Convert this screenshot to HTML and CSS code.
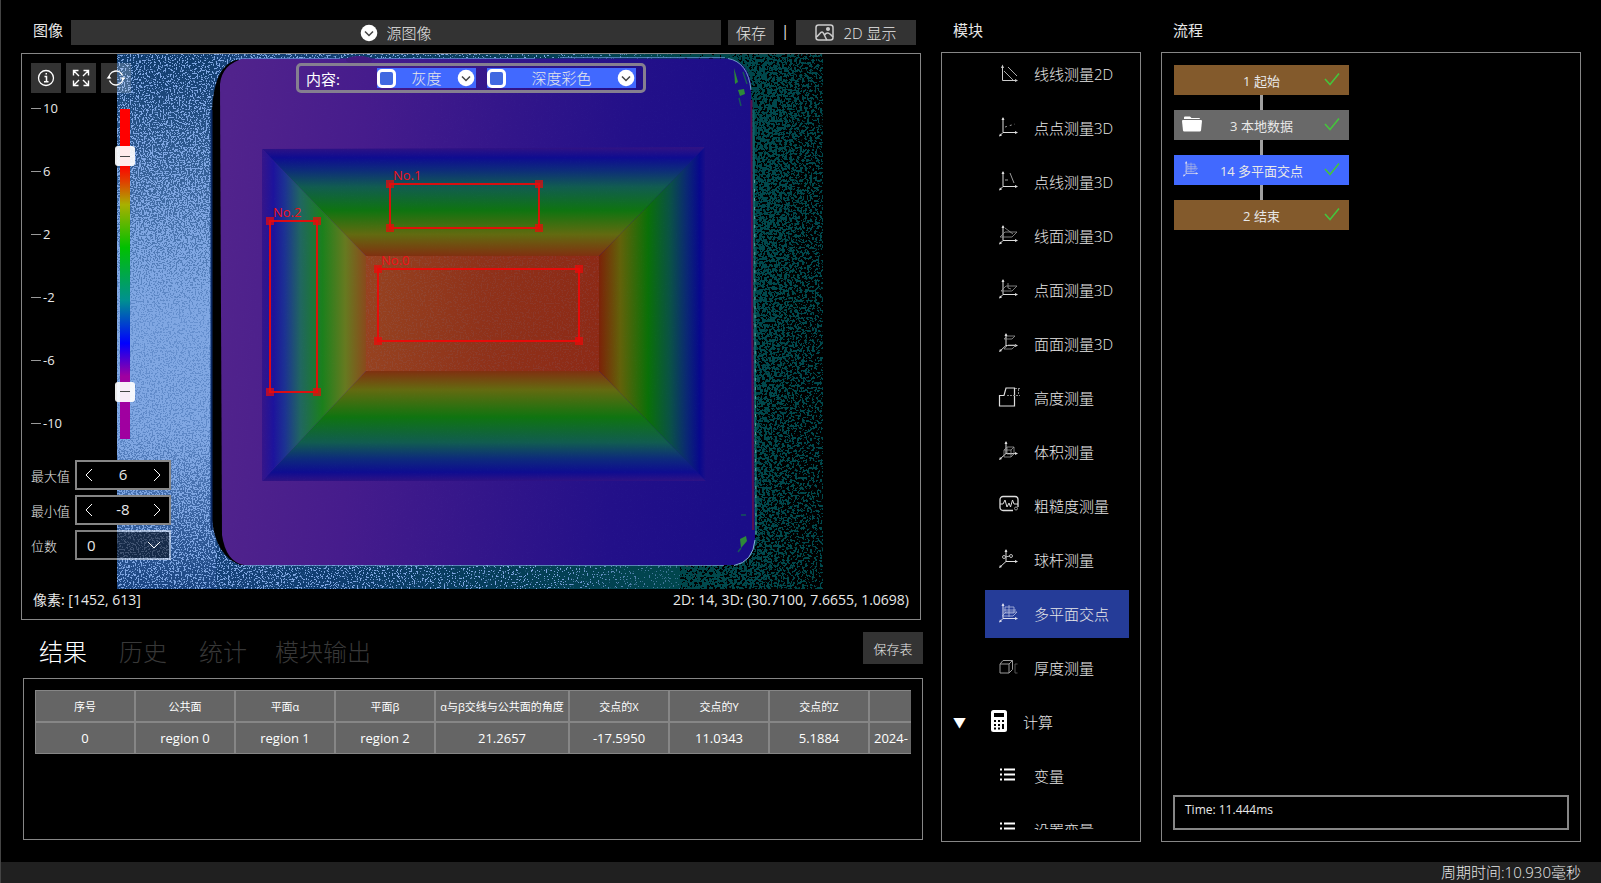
FILE: index.html
```html
<!DOCTYPE html>
<html lang="zh-CN">
<head>
    <meta charset="UTF-8">
    <meta name="viewport" content="width=device-width, initial-scale=1.0">
    <title>多平面交点</title>
    <link rel="stylesheet" href="styles.css">
</head>
<body>

    <!-- 公用图标 -->
    <svg class="defs" aria-hidden="true">
        <symbol id="i-down" viewBox="0 0 18 18"><circle cx="9" cy="9" r="8.3" fill="#fff"/><path d="M5 7.5l4 4 4-4" fill="none" stroke="#444" stroke-width="1.5"/></symbol>
        <symbol id="i-check" viewBox="0 0 16 14"><path d="M1 7l5 5.500L15 1.500" fill="none" stroke="#45c43c" stroke-width="1.600"/></symbol>
        <symbol id="i-axis" viewBox="0 0 20 20"><path d="M4 1v14.500h14M4 15.500l-3 3" fill="none" stroke="#ddd"/><path d="M4 0l-1.500 3h3zM19 15.500l-3-1.500v3zM0 19.500l1-3 2 2z" fill="#ddd"/></symbol>
        <symbol id="i-axis2" viewBox="0 0 20 20"><path d="M7 1v11.500h11M7 12.500l-6 5.500" fill="none" stroke="#ddd"/><path d="M7 0l-1.500 3h3zM19 12.500l-3-1.500v3zM0 19l1-3 2 2z" fill="#ddd"/></symbol>
        <symbol id="i-planes" viewBox="0 0 20 20"><path d="M4 1v14.500h14M4 15.500l-3 3" fill="none" stroke="#dde"/><path d="M4 0l-1.500 3h3zM19 15.500l-3-1.500v3zM0 19.500l1-3 2 2z" fill="#dde"/><path d="M6 4h9v6H6zM3 13l4-4h11l-4 4zM10 2v12M5 7h12" fill="none" stroke="#b4bbdf" stroke-width=".8"/></symbol>
        <symbol id="i-list" viewBox="0 0 20 20"><path d="M5 4.500h11M5 9.500h11M5 14.500h11M1 4.500h2M1 9.500h2M1 14.500h2" stroke="#fff" stroke-width="2"/></symbol>
    </svg>

    <main class="main">

        <!-- 左侧：图像与结果 -->
        <div class="left">
            <section class="image">
                <div class="image-head">
                    <h2 class="title">图像</h2>
                    <label class="source">
                        <svg class="icon18"><use href="#i-down"/></svg>
                        <select aria-label="图像来源"><option>源图像</option></select>
                    </label>
                    <button class="btn btn-save">保存</button>
                    <span class="sep">|</span>
                    <button class="btn btn-show">
                        <svg width="19" height="17" viewBox="0 0 19 17" fill="none" stroke="#ccc" stroke-width="1.500"><rect x="1" y="1" width="17" height="15" rx="2.500"/><path d="M1 13c3-1 4-5 6-5s3 6 5 8M9.500 11c2-3 4-3 8.500 2"/><circle cx="13" cy="5" r="1.300" fill="#ccc"/></svg>
                        2D 显示
                    </button>
                </div>

                <div class="viewer">
                    <!-- 深度图 -->
                    <svg class="scene" viewBox="22 54 898 565" preserveAspectRatio="xMinYMin meet" aria-hidden="true">
                        <defs>
                            <filter id="grainLight" x="0" y="0" width="1" height="1" color-interpolation-filters="sRGB">
                                <feTurbulence type="fractalNoise" baseFrequency="0.63" numOctaves="2" seed="4"/>
                                <feColorMatrix values="0 0 0 0 0  0 0 0 0 0  0 0 0 0 0  0 0 0 3 -1" result="n"/>
                                <feComposite in="SourceGraphic" in2="n" operator="arithmetic" k2="7" k3="7" k4="-7" result="m"/>
                                <feFlood flood-color="#80a7e3"/>
                                <feComposite in2="m" operator="in"/>
                            </filter>
                            <filter id="grainTeal" filterUnits="userSpaceOnUse" x="680" y="54" width="143" height="535" color-interpolation-filters="sRGB">
                                <feTurbulence type="fractalNoise" baseFrequency="0.4" numOctaves="3" seed="11"/>
                                <feColorMatrix values="0 0 0 0 0  0 0 0 0 0  0 0 0 0 0  0 0 0 3 -1" result="n"/>
                                <feComposite in="SourceGraphic" in2="n" operator="arithmetic" k2="14" k3="14" k4="-14" result="m"/>
                                <feFlood flood-color="#00484c"/>
                                <feComposite in2="m" operator="in"/>
                            </filter>
                            <linearGradient id="base" x1="117" x2="823" y1="0" y2="0" gradientUnits="userSpaceOnUse">
                                <stop offset="0" stop-color="#1c4680"/><stop offset=".3" stop-color="#0f3d70"/><stop offset=".55" stop-color="#053d58"/><stop offset=".8" stop-color="#00464c"/><stop offset="1" stop-color="#00464c"/>
                            </linearGradient>
                            <linearGradient id="side" x1="0" x2="0" y1="54" y2="589" gradientUnits="userSpaceOnUse">
                                <stop offset="0" stop-color="#0f3b6c"/><stop offset=".5" stop-color="#6690cf"/><stop offset=".7" stop-color="#5f89c8"/><stop offset="1" stop-color="#1a4480"/>
                            </linearGradient>
                            <linearGradient id="sideDensity" x1="0" x2="0" y1="54" y2="589" gradientUnits="userSpaceOnUse">
                                <stop offset="0" stop-color="#fff" stop-opacity=".28"/><stop offset=".25" stop-color="#fff" stop-opacity=".52"/><stop offset=".45" stop-color="#fff" stop-opacity=".78"/><stop offset=".7" stop-color="#fff" stop-opacity=".72"/><stop offset=".85" stop-color="#fff" stop-opacity=".48"/><stop offset="1" stop-color="#fff" stop-opacity=".32"/>
                            </linearGradient>
                            <linearGradient id="stripDensity" x1="216" x2="700" y1="0" y2="0" gradientUnits="userSpaceOnUse">
                                <stop offset="0" stop-color="#fff" stop-opacity=".34"/><stop offset="1" stop-color="#fff" stop-opacity=".05"/>
                            </linearGradient>
                            <linearGradient id="tealDensity" x1="680" x2="823" y1="0" y2="0" gradientUnits="userSpaceOnUse">
                                <stop offset="0" stop-color="#fff"/><stop offset=".5" stop-color="#fff" stop-opacity=".8"/><stop offset=".75" stop-color="#fff" stop-opacity=".58"/><stop offset="1" stop-color="#fff" stop-opacity=".4"/>
                            </linearGradient>
                            <linearGradient id="fade" x1="0" x2="0" y1="54" y2="589" gradientUnits="userSpaceOnUse">
                                <stop offset="0" stop-color="#fff"/><stop offset=".15" stop-color="#fff"/><stop offset=".5" stop-color="#e8e8e8"/><stop offset=".75" stop-color="#ccc"/><stop offset="1" stop-color="#ccc"/>
                            </linearGradient>
                            <mask id="fadeMask" maskUnits="userSpaceOnUse" x="680" y="54" width="143" height="535"><rect x="680" y="54" width="143" height="535" fill="url(#fade)"/></mask>
                            <linearGradient id="plate" x1="220" x2="755" y1="300" y2="330" gradientUnits="userSpaceOnUse">
                                <stop offset="0" stop-color="#51238c"/><stop offset=".25" stop-color="#461c8c"/><stop offset=".5" stop-color="#34168a"/><stop offset=".75" stop-color="#231089"/><stop offset="1" stop-color="#1a0d88"/>
                            </linearGradient>
                            <linearGradient id="slopeL" x1="262" x2="366" y1="0" y2="0" gradientUnits="userSpaceOnUse">
                                <stop offset="0" stop-color="#35158a"/><stop offset=".11" stop-color="#1d139c"/><stop offset=".22" stop-color="#1c3292"/><stop offset=".37" stop-color="#206660"/><stop offset=".58" stop-color="#1b801c"/><stop offset=".8" stop-color="#667a20"/><stop offset="1" stop-color="#8a4a1c"/>
                            </linearGradient>
                            <linearGradient id="slopeR" x1="706" x2="599" y1="0" y2="0" gradientUnits="userSpaceOnUse">
                                <stop offset="0" stop-color="#1d0f88"/><stop offset=".06" stop-color="#08088c"/><stop offset=".18" stop-color="#0a2874"/><stop offset=".33" stop-color="#0a5048"/><stop offset=".54" stop-color="#0a7008"/><stop offset=".8" stop-color="#62620a"/><stop offset="1" stop-color="#7c2208"/>
                            </linearGradient>
                            <linearGradient id="slopeT" x1="0" x2="0" y1="148" y2="256" gradientUnits="userSpaceOnUse">
                                <stop offset="0" stop-color="#2f1284"/><stop offset=".09" stop-color="#0e0c90"/><stop offset=".2" stop-color="#0d2a7c"/><stop offset=".36" stop-color="#115c50"/><stop offset=".58" stop-color="#0f7410"/><stop offset=".8" stop-color="#626a10"/><stop offset="1" stop-color="#803010"/>
                            </linearGradient>
                            <linearGradient id="slopeB" x1="0" x2="0" y1="481" y2="371" gradientUnits="userSpaceOnUse">
                                <stop offset="0" stop-color="#2f1284"/><stop offset=".08" stop-color="#0e0c90"/><stop offset=".2" stop-color="#0d2a7c"/><stop offset=".35" stop-color="#115c50"/><stop offset=".58" stop-color="#0f7410"/><stop offset=".83" stop-color="#646a10"/><stop offset="1" stop-color="#803010"/>
                            </linearGradient>
                            <linearGradient id="topFace" x1="0" x2="1" y1="0" y2="0">
                                <stop offset="0" stop-color="#964220"/><stop offset=".5" stop-color="#8f321a"/><stop offset="1" stop-color="#8d2a16"/>
                            </linearGradient>
                        </defs>

                        <!-- 背景噪点 -->
                        <rect x="117" y="54" width="563" height="535" fill="url(#base)"/>
                        <rect x="117" y="54" width="99" height="535" fill="url(#side)"/>
                        <rect x="117" y="54" width="99" height="535" fill="url(#sideDensity)" filter="url(#grainLight)"/>
                        <rect x="216" y="54" width="484" height="535" fill="url(#stripDensity)" filter="url(#grainLight)"/>
                        <g filter="url(#grainTeal)">
                            <rect x="680" y="54" width="143" height="535" fill="url(#tealDensity)" mask="url(#fadeMask)"/>
                        </g>

                        <!-- 底板 -->
                        <path d="M212 110V520Q216 556 240 565H260L250 60H236Q214 66 212 110z" fill="#000"/>
                        <path d="M211.500 110v420" stroke="#0b2a66" stroke-width="2"/>
                        <path d="M220 84Q222 64 244 58.500H728Q748 62 751 84L755 540Q753 562 734 565H244Q226 562 222 535z" fill="url(#plate)"/>
                        <ellipse cx="359" cy="60" rx="13" ry="4" fill="#431c80"/>
                        <path d="M236 58.500q3-.5 8 0h96M375 58.500h160M560 57.500h165" fill="none" stroke="#6b94dc" stroke-opacity=".7"/>
                        <path d="M244 565.500h480" stroke="#7aa4dc" stroke-opacity=".7"/>
                        <path d="M728 58.500Q748 62 751 90" fill="none" stroke="#86b6d8" stroke-opacity=".8"/>
                        <path d="M734 565.500Q753 562 755 540" fill="none" stroke="#86b6d8"/>
                        <path d="M751.500 100L753 530" stroke="#5a1050" stroke-width="2"/>
                        <path d="M753.500 110L756 535" stroke="#0c6468" stroke-width="2"/>
                        <path d="M754.500 180L756 535" stroke="#5a9a9c" stroke-dasharray="3 6"/>
                        <path d="M734 68l4 14-3 2zM738 90l6-1 1 5-5 2zM740 539l6-3 1 5-6 7z" fill="#2d8a38"/>
                        <path d="M739 98l2 8M743 72l4 12M741 548l-3 4M741 515h5" stroke="#16565a" stroke-width="1.500"/>

                        <!-- 四个斜面和顶面 -->
                        <path d="M262 149L366 256H599L705 147z" fill="url(#slopeT)"/>
                        <path d="M262 481L366 371H599L706 481z" fill="url(#slopeB)"/>
                        <path d="M262 149L366 256V371L262 481z" fill="url(#slopeL)"/>
                        <path d="M705 147L599 256V371L706 481z" fill="url(#slopeR)"/>
                        <rect x="366" y="256" width="233" height="115" fill="url(#topFace)"/>
                        <rect x="224" y="62" width="524" height="500" fill="#fff" fill-opacity=".01" filter="url(#grainLight)" opacity=".16"/>
                        <rect x="366" y="256" width="233" height="115" fill="#fff" fill-opacity=".3" filter="url(#grainLight)" opacity=".07"/>

                        <!-- 测量区域 -->
                        <g fill="none" stroke="#f00808" stroke-width="2" stroke-opacity=".9">
                            <rect x="390" y="184" width="149" height="44"/>
                            <rect x="270" y="221" width="47" height="171"/>
                            <rect x="378" y="269" width="201" height="72"/>
                        </g>
                        <path d="M386 180h8v8h-8zM535 180h8v8h-8zM386 224h8v8h-8zM535 224h8v8h-8zM266 217h8v8h-8zM313 217h8v8h-8zM266 388h8v8h-8zM313 388h8v8h-8zM374 265h8v8h-8zM575 265h8v8h-8zM374 337h8v8h-8zM575 337h8v8h-8z" fill="#f00808" fill-opacity=".7"/>
                        <g class="roi-name">
                            <text x="393" y="180">No.1</text>
                            <text x="273" y="217">No.2</text>
                            <text x="381" y="265">No.0</text>
                        </g>
                    </svg>

                    <div class="viewer-top">
                        <div class="tools">
                            <button class="tool" aria-label="信息"><svg width="18" height="18" viewBox="0 0 18 18" fill="none" stroke="#fff" stroke-width="1.300"><circle cx="9" cy="9" r="7.500"/><path d="M7.500 7.500h2v5M7 12.800h4.500M8.500 4.800h1.500" stroke-width="1.500"/></svg></button>
                            <button class="tool" aria-label="全屏"><svg width="18" height="18" viewBox="0 0 18 18" fill="none" stroke="#fff" stroke-width="1.400"><path d="M1.500 6.500v-5h5M11.500 1.500h5v5M16.500 11.500v5h-5M6.500 16.500h-5v-5M2 2l5 5M16 2l-5 5M16 16l-5-5M2 16l5-5"/></svg></button>
                            <button class="tool" aria-label="刷新"><svg width="20" height="18" viewBox="0 0 20 18" fill="none" stroke="#fff" stroke-width="1.400"><path d="M3 9.500A7 7 0 0 1 16.500 6.500M17 8.500A7 7 0 0 1 3.500 11.500"/><path d="M.5 9.500L3 6.500l2.500 3zM14.500 8.500L17 11.500l2.500-3z" fill="#fff" stroke="none"/></svg></button>
                        </div>
                        <div class="content-bar">
                            <span class="content-label">内容:</span>
                            <div class="layer layer-gray">
                                <input type="checkbox" aria-label="灰度">
                                <select aria-label="灰度图层"><option>灰度</option></select>
                                <svg class="icon18"><use href="#i-down"/></svg>
                            </div>
                            <div class="layer layer-depth">
                                <input type="checkbox" aria-label="深度彩色">
                                <select aria-label="深度图层"><option>深度彩色</option></select>
                                <svg class="icon18"><use href="#i-down"/></svg>
                            </div>
                        </div>
                    </div>

                    <div class="scale">
                        <ul class="ticks">
                            <li>10</li>
                            <li>6</li>
                            <li>2</li>
                            <li>-2</li>
                            <li>-6</li>
                            <li>-10</li>
                        </ul>
                        <div class="slider">
                            <input type="range" min="-10.2" max="8.2" step="0.2" value="6" aria-label="最大值">
                            <input type="range" min="-10.2" max="8.2" step="0.2" value="-8" aria-label="最小值">
                        </div>
                    </div>

                    <div class="limits">
                        <div class="limit">
                            <label for="max">最大值</label>
                            <div class="stepper">
                                <button aria-label="减小最大值"><svg width="8" height="14" viewBox="0 0 8 14"><path d="M7 1L1 7l6 6"/></svg></button>
                                <input type="text" id="max" value="6">
                                <button aria-label="增大最大值"><svg width="8" height="14" viewBox="0 0 8 14"><path d="M1 1l6 6-6 6"/></svg></button>
                            </div>
                        </div>
                        <div class="limit">
                            <label for="min">最小值</label>
                            <div class="stepper">
                                <button aria-label="减小最小值"><svg width="8" height="14" viewBox="0 0 8 14"><path d="M7 1L1 7l6 6"/></svg></button>
                                <input type="text" id="min" value="-8">
                                <button aria-label="增大最小值"><svg width="8" height="14" viewBox="0 0 8 14"><path d="M1 1l6 6-6 6"/></svg></button>
                            </div>
                        </div>
                        <div class="limit">
                            <label for="digits">位数</label>
                            <div class="stepper digits">
                                <select id="digits"><option>0</option></select>
                                <svg width="14" height="8" viewBox="0 0 14 8"><path d="M1 1l6 6 6-6"/></svg>
                            </div>
                        </div>
                    </div>

                    <div class="readout">
                        <span>像素: [1452, 613]</span>
                        <span>2D: 14, 3D: (30.7100, 7.6655, 1.0698)</span>
                    </div>
                </div>
            </section>

            <section class="results">
                <div class="results-head">
                    <nav class="tabs">
                        <a href="#result" class="tab active">结果</a>
                        <a href="#history" class="tab">历史</a>
                        <a href="#stats" class="tab">统计</a>
                        <a href="#output" class="tab">模块输出</a>
                    </nav>
                    <button class="btn btn-table">保存表</button>
                </div>
                <div class="table-box" id="result">
                    <div class="table-scroll">
                        <table>
                            <thead>
                                <tr><th>序号</th><th>公共面</th><th>平面α</th><th>平面β</th><th class="wide">α与β交线与公共面的角度</th><th>交点的X</th><th>交点的Y</th><th>交点的Z</th><th class="date"></th></tr>
                            </thead>
                            <tbody>
                                <tr><td>0</td><td>region 0</td><td>region 1</td><td>region 2</td><td>21.2657</td><td>-17.5950</td><td>11.0343</td><td>5.1884</td><td class="date">2024-</td></tr>
                            </tbody>
                        </table>
                    </div>
                </div>
            </section>
        </div>

        <!-- 模块列表 -->
        <section class="modules">
            <h2 class="title">模块</h2>
            <div class="panel">
                <div class="module-scroll">
                    <ul class="module-list">
                        <li><button class="module"><svg class="icon20" viewBox="0 0 20 20"><path d="M3.500 3v14.500H18" fill="none" stroke="#ccc"/><path d="M3.500 1.500L2 5h3zM19 17.500L16 16v3z" fill="#ccc"/><path d="M5 8l9 9M9 4l9 9" fill="none" stroke="#aaa"/></svg>线线测量2D</button></li>
                        <li><button class="module"><svg class="icon20" viewBox="0 0 20 20"><use href="#i-axis"/><path d="M6 10l10-3" stroke="#999" stroke-dasharray="2 3"/></svg>点点测量3D</button></li>
                        <li><button class="module"><svg class="icon20" viewBox="0 0 20 20"><use href="#i-axis"/><path d="M11 2l4 10M6 9h3" stroke="#999"/></svg>点线测量3D</button></li>
                        <li><button class="module"><svg class="icon20" viewBox="0 0 20 20"><use href="#i-axis"/><path d="M1 12l5-5h12l-5 5zM6 3l8 6" fill="none" stroke="#999" stroke-width=".8"/></svg>线面测量3D</button></li>
                        <li><button class="module"><svg class="icon20" viewBox="0 0 20 20"><use href="#i-axis"/><path d="M2 12l5-5h11l-5 5zM9 4v5l3 1" fill="none" stroke="#999" stroke-width=".8"/></svg>点面测量3D</button></li>
                        <li><button class="module"><svg class="icon20" viewBox="0 0 20 20"><use href="#i-axis2"/><path d="M5 6l3-3h8l-3 3zM5 16l4-4h8l-4 4z" fill="none" stroke="#999" stroke-width=".8"/></svg>面面测量3D</button></li>
                        <li><button class="module"><svg class="icon20" viewBox="0 0 20 20"><path d="M.5 8.500h4.500l2-7.500h8.500v18H.5z" fill="none" stroke="#ddd" stroke-width="1.200"/><path d="M16 1.500h5M8 8.500h13M19.500 2v6" fill="none" stroke="#888" stroke-dasharray="2 1"/></svg>高度测量</button></li>
                        <li><button class="module"><svg class="icon20" viewBox="0 0 20 20"><use href="#i-axis2"/><path d="M5 9h7v7H5zM8 6h7v7H8zM5 9l3-3M12 9l3-3M12 16l3-3" fill="none" stroke="#999" stroke-width=".8"/></svg>体积测量</button></li>
                        <li><button class="module"><svg class="icon20" viewBox="0 0 20 20"><path d="M14 15.500H4a3 3 0 0 1-3-3v-8a3 3 0 0 1 3-3h12a3 3 0 0 1 3 3V12" fill="none" stroke="#ddd" stroke-width="1.300"/><path d="M1 9h3l2-4 2 7 2-4 1.500 4 2-7 1.500 4H19" fill="none" stroke="#ddd"/><circle cx="17" cy="13.500" r="1.500" fill="none" stroke="#bbb" stroke-width=".8"/></svg>粗糙度测量</button></li>
                        <li><button class="module"><svg class="icon20" viewBox="0 0 20 20"><use href="#i-axis2"/><circle cx="5" cy="8" r="1.500" fill="none" stroke="#bbb"/><circle cx="12" cy="7" r="1.500" fill="none" stroke="#bbb"/><path d="M6 8l5-1" stroke="#bbb"/></svg>球杆测量</button></li>
                        <li><button class="module selected"><svg class="icon20"><use href="#i-planes"/></svg>多平面交点</button></li>
                        <li><button class="module"><svg class="icon20" viewBox="0 0 20 20"><path d="M1 7h9v9H1zM1 7l3-3.500h9.500L10 7M13.500 3.500v9L10 16" fill="none" stroke="#999"/><path d="M18.500 7H16v9h2.500" fill="none" stroke="#555"/></svg>厚度测量</button></li>
                        <li>
                            <button class="module-group"><span class="arrow">▼</span><svg width="16" height="22" viewBox="0 0 16 22"><rect width="16" height="22" rx="2.500" fill="#fff"/><path d="M3 3h10v4H3zM3 10h2v2H3zM7 10h2v2H7zM11 10h2v2h-2zM3 14h2v2H3zM7 14h2v2H7zM11 14h2v5h-2zM3 17.500h2v2H3zM7 17.500h2v2H7z" fill="#000"/></svg>计算</button>
                        </li>
                        <li><button class="module"><svg class="icon20"><use href="#i-list"/></svg>变量</button></li>
                        <li><button class="module"><svg class="icon20"><use href="#i-list"/></svg>设置变量</button></li>
                    </ul>
                </div>
            </div>
        </section>

        <!-- 流程 -->
        <section class="flow">
            <h2 class="title">流程</h2>
            <div class="panel">
                <ol class="nodes">
                    <li class="node edge"><span>1 起始</span><svg class="check"><use href="#i-check"/></svg></li>
                    <li class="node data"><svg class="node-icon" width="20" height="16" viewBox="0 0 20 16" fill="#fff"><path d="M2 3V1.500Q2 .5 3 .5h5l1.500 1.500H17q1 0 1 1z"/><path d="M1 4h18q1 0 1 1l-1 9.500q-.3 1-1.200 1H2.200q-1 0-1.200-1L0 5q0-1 1-1z"/></svg><span>3 本地数据</span><svg class="check"><use href="#i-check"/></svg></li>
                    <li class="node current"><svg class="node-icon" width="18" height="16"><use href="#i-planes"/></svg><span>14 多平面交点</span><svg class="check"><use href="#i-check"/></svg></li>
                    <li class="node edge"><span>2 结束</span><svg class="check"><use href="#i-check"/></svg></li>
                </ol>
                <div class="time">Time: 11.444ms</div>
            </div>
        </section>
    </main>

    <footer class="status">周期时间:10.930毫秒</footer>

</body>
</html>
```
FILE: styles.css
```css
* {
    box-sizing: border-box;
}

body {
    margin: 0;
    height: 100vh;
    display: flex;
    flex-direction: column;
    background: #000;
    color: #e8e8e8;
    border-left: 1px solid #444;
    font-family: "Open Sans", "Noto Sans CJK SC", sans-serif;
    font-size: 15px;
    font-weight: 300;
    overflow: hidden;
}

button,
input,
select {
    font: inherit;
    color: inherit;
    margin: 0;
    padding: 0;
    border: none;
    border-radius: 0;
    background: none;
}

select {
    appearance: none;
    cursor: pointer;
}

button {
    cursor: pointer;
}

ul,
ol {
    list-style: none;
    margin: 0;
    padding: 0;
}

svg {
    flex: none;
    overflow: visible;
}

.defs {
    position: absolute;
    width: 0;
    height: 0;
}

.icon18 {
    width: 18px;
    height: 18px;
}

.icon20 {
    width: 20px;
    height: 20px;
}

.title {
    margin: 0;
    font-size: 15px;
    font-weight: 400;
    line-height: 20px;
}

/* 三栏布局 */
.main {
    flex: 1;
    min-height: 0;
    display: grid;
    grid-template-columns: minmax(0, 902fr) 202px minmax(0, 420fr);
    column-gap: 18px;
    padding: 20px;
}

.left {
    display: flex;
    flex-direction: column;
    min-height: 0;
    padding-bottom: 2px;
}

/* 图像区 */
.image {
    flex: 1;
    min-height: 0;
    display: flex;
    flex-direction: column;
    gap: 8px;
    padding-right: 2px;
}

.image-head {
    display: flex;
    align-items: stretch;
    height: 25px;
    padding: 0 5px 0 12px;
}

.image-head .title {
    width: 38px;
}

.source {
    flex: 1;
    display: flex;
    align-items: center;
    justify-content: center;
    gap: 9px;
    background: #333;
}

.btn {
    display: flex;
    align-items: center;
    justify-content: center;
    background: #333;
}

.btn-save {
    width: 46px;
    margin-left: 7px;
}

.sep {
    width: 22px;
    text-align: center;
    font-weight: 400;
}

.btn-show {
    width: 120px;
    gap: 9px;
}

.viewer {
    position: relative;
    flex: 1;
    min-height: 0;
    display: flex;
    flex-direction: column;
    padding: 9px;
    border: 1px solid #868686;
}

.scene {
    position: absolute;
    left: 0;
    top: 0;
    width: 100%;
    height: 100%;
}

.roi-name {
    font-size: 13px;
    font-weight: 400;
    fill: #f01018;
}

.viewer-top,
.scale,
.limits,
.readout {
    position: relative;
}

.viewer-top {
    display: grid;
    grid-template-columns: 1fr auto 1fr;
    height: 30px;
}

.tools {
    display: flex;
    gap: 5px;
}

.tool {
    display: flex;
    align-items: center;
    justify-content: center;
    width: 30px;
    height: 30px;
    background: rgba(255, 255, 255, 0.2);
}

.content-bar {
    display: flex;
    align-items: center;
    width: 350px;
    padding: 0 7px;
    border: 3px solid #857f90;
    border-radius: 5px;
}

.content-label {
    flex: 1;
    font-weight: 400;
    color: #fff;
}

.layer {
    display: flex;
    align-items: center;
    height: 20px;
    padding-right: 1px;
    background: #4169ff;
}

.layer-gray {
    width: 99px;
}

.layer-depth {
    width: 149px;
    margin-left: 11px;
}

.layer input {
    appearance: none;
    width: 19px;
    height: 19px;
    background: #4169e1;
    border: 3px solid #fff;
    border-radius: 5px;
}

.layer select {
    flex: 1;
    text-align-last: center;
}

/* 色标 */
.scale {
    display: flex;
    margin-top: 5px;
}

.ticks {
    width: 84px;
    font-size: 13px;
    font-weight: 400;
    line-height: 19px;
}

.ticks li {
    display: flex;
    align-items: center;
    gap: 2px;
    height: 21px;
    margin-bottom: 42px;
}

.ticks li:last-child {
    margin-bottom: 0;
}

.ticks li::before {
    content: "";
    width: 10px;
    height: 1px;
    background: #999;
}

.slider {
    display: grid;
    width: 20px;
    height: 330px;
    margin-top: 11px;
    background: linear-gradient(#f00 0, #f00 17%, #e04000 22%, #a8b000 29%, #00c000 42%, #009090 58%, #00f 71%, #a000a0 81%) center / 10px 100% no-repeat;
}

.slider input {
    grid-area: 1 / 1;
    appearance: none;
    writing-mode: vertical-lr;
    direction: rtl;
    width: 20px;
    height: 330px;
    pointer-events: none;
}

.slider input::-webkit-slider-thumb {
    appearance: none;
    width: 20px;
    height: 20px;
    border-radius: 3px;
    background: linear-gradient(#444, #444) center / 10px 1px no-repeat, rgba(255, 255, 255, 0.92);
    pointer-events: auto;
}

.limits {
    display: flex;
    flex-direction: column;
    gap: 5px;
    margin-top: 21px;
}

.limit {
    display: flex;
    align-items: center;
}

.limit label {
    width: 44px;
    font-size: 13px;
}

.stepper {
    display: flex;
    align-items: center;
    width: 96px;
    height: 30px;
    border: 2px solid #868686;
    background: #000;
}

.stepper button {
    display: flex;
    justify-content: center;
    width: 24px;
}

.stepper svg {
    fill: none;
    stroke: #fff;
}

.stepper input {
    flex: 1;
    width: 0;
    padding-bottom: 2px;
    text-align: center;
    font-weight: 400;
}

.digits {
    padding: 0 8px 0 10px;
    border-color: rgba(255, 255, 255, 0.5);
    background: rgba(0, 0, 0, 0.5);
    background-clip: padding-box;
}

.digits select {
    flex: 1;
    font-weight: 400;
}

.readout {
    display: flex;
    justify-content: space-between;
    margin-top: auto;
    padding: 0 2px;
    font-size: 14px;
    font-weight: 400;
    line-height: 20px;
}

/* 结果区 */
.results {
    padding-left: 2px;
}

.results-head {
    display: flex;
    align-items: center;
    justify-content: space-between;
    height: 32px;
    margin: 12px 0 14px;
}

.tabs {
    display: flex;
}

.tab {
    min-width: 80px;
    padding: 8px 12px 0;
    text-align: center;
    text-decoration: none;
    font-size: 24px;
    line-height: 32px;
    color: #383838;
}

.tab.active {
    color: #fff;
}

.btn-table {
    width: 60px;
    height: 32px;
    font-size: 13px;
}

.table-box {
    height: 162px;
    padding: 11px;
    border: 1px solid #868686;
}

.table-scroll {
    overflow: hidden;
}

table {
    width: 1014px;
    table-layout: fixed;
    border-spacing: 0;
    font-weight: 400;
}

th,
td {
    width: 100px;
    height: 32px;
    padding: 0;
    border: 1px solid #868686;
    background: #656565;
    color: #fff;
    text-align: center;
    white-space: nowrap;
    font-size: 13px;
}

th {
    font-size: 11px;
    font-weight: 400;
}

.wide {
    width: 134px;
}

.date {
    width: 180px;
    padding-left: 4px;
    text-align: left;
}

/* 模块与流程 */
.modules,
.flow {
    display: flex;
    flex-direction: column;
    min-height: 0;
}

.modules {
    padding-right: 2px;
}

.modules .title,
.flow .title {
    height: 32px;
    padding-left: 12px;
}

.panel {
    flex: 1;
    min-height: 0;
    display: flex;
    flex-direction: column;
    padding: 11px;
    border: 1px solid #868686;
}

.module-scroll {
    flex: 1;
    min-height: 0;
    overflow: hidden;
}

/* 列表向上滚动了一点 */
.module-list {
    margin-top: -14px;
}

.module-list li {
    height: 48px;
    margin-bottom: 6px;
}

.module,
.module-group {
    display: flex;
    align-items: center;
    height: 48px;
    padding-bottom: 2px;
}

.module {
    gap: 15px;
    width: calc(100% - 32px);
    margin-left: 32px;
    padding-left: 14px;
}

.module.selected {
    background: #253c98;
}

.module-group {
    gap: 16px;
}

.arrow {
    width: 22px;
    font-size: 13px;
    color: #fff;
    text-align: left;
}

.flow .panel {
    padding: 12px 11px 11px;
}

.nodes {
    display: flex;
    flex-direction: column;
    gap: 15px;
    margin-left: 1px;
}

.node {
    position: relative;
    display: flex;
    align-items: center;
    justify-content: center;
    width: 175px;
    height: 30px;
    font-size: 13px;
}

.node span {
    font-weight: 400;
}

/* 节点之间的连线 */
.node + .node::before {
    content: "";
    position: absolute;
    left: 86px;
    bottom: 100%;
    width: 3px;
    height: 15px;
    background: #a0a0a0;
}

.node-icon {
    position: absolute;
    left: 8px;
    top: 6px;
}

.check {
    position: absolute;
    right: 9px;
    top: 7px;
    width: 16px;
    height: 14px;
}

.edge {
    background: #835a2c;
}

.data {
    background: #696969;
}

.current {
    background: #4169ff;
}

.time {
    height: 35px;
    margin-top: auto;
    padding: 3px 10px;
    border: 2px solid #868686;
    font-size: 12px;
    font-weight: 400;
    line-height: 20px;
}

.status {
    height: 21px;
    padding-right: 20px;
    background: #202020;
    text-align: right;
    line-height: 20px;
}
```
